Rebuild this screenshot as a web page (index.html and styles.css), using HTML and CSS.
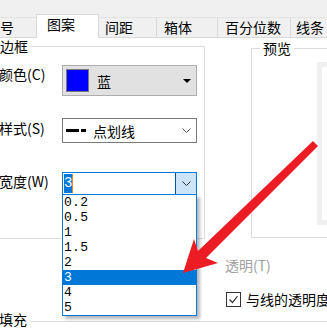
FILE: index.html
```html
<!DOCTYPE html>
<html lang="zh-CN">
<head>
  <meta charset="UTF-8">
  <meta name="viewport" content="width=device-width, initial-scale=1.0">
  <title>设置单元格格式</title>
  <link rel="stylesheet" href="styles.css">
</head>
<body>
  <div class="page">
    <div class="tabs">
      <span class="tab tab-num">号</span>
      <span class="tab tab-active">图案</span>
      <span class="tab tab-space">间距</span>
      <span class="tab tab-box">箱体</span>
      <span class="tab tab-pct">百分位数</span>
      <span class="tab tab-line">线条</span>
    </div>

    <div class="panel">
      <fieldset class="group group-border">
        <legend>边框</legend>
        <div class="row row-color">
          <span class="label">颜色(C)</span>
          <div class="combo combo-color">
            <span class="swatch"></span>
            <span class="combo-text">蓝</span>
            <span class="tri"></span>
          </div>
        </div>
        <div class="row row-style">
          <span class="label">样式(S)</span>
          <div class="combo combo-style">
            <span class="dash"><i class="dash-long"></i><i class="dash-short"></i></span>
            <span class="combo-text">点划线</span>
            <svg class="chev" width="9" height="5" viewBox="0 0 9 5"><polyline points="0.5,0.5 4.5,4.5 8.5,0.5" fill="none" stroke="#555" stroke-width="1"/></svg>
          </div>
        </div>
        <div class="row row-width">
          <span class="label">宽度(W)</span>
          <div class="combo combo-width">
            <span class="value"><span class="sel">3</span><span class="caret"></span></span>
            <span class="drop-btn">
              <svg class="chev" width="9" height="5" viewBox="0 0 9 5"><polyline points="0.5,0.5 4.5,4.5 8.5,0.5" fill="none" stroke="#333" stroke-width="1"/></svg>
            </span>
            <ul class="drop-list">
              <li>0.2</li>
              <li>0.5</li>
              <li>1</li>
              <li>1.5</li>
              <li>2</li>
              <li class="active">3</li>
              <li>4</li>
              <li>5</li>
            </ul>
          </div>
        </div>
      </fieldset>

      <fieldset class="group group-preview">
        <legend>预览</legend>
        <div class="preview-box"></div>
      </fieldset>
    </div>

    <div class="extra">
      <div class="muted">透明(T)</div>
      <div class="check-row">
        <span class="checkbox">
          <svg width="13" height="13" viewBox="0 0 13 13"><polyline points="2.5,6.5 5.5,9.5 10.5,3" fill="none" stroke="#333" stroke-width="1.2"/></svg>
        </span>
        <span>与线的透明度</span>
      </div>
    </div>

    <div class="section-title">填充</div>

    <svg class="arrow" width="327" height="330" viewBox="0 0 327 330">
      <polygon points="183,273 218,263 206,258 318,146 313,141 198,251 194,239" fill="#ec1c24"/>
    </svg>
  </div>
</body>
</html>
```

FILE: styles.css
```css
*{
  box-sizing: border-box;
}
html, body{
  margin: 0;
  padding: 0;
  overflow: hidden;
  background: #fff;
}
body{
  font-family: "Noto Sans CJK SC", "Noto Sans", sans-serif;
  font-size: 14px;
  line-height: 18px;
  color: #000;
}
.page{
  position: relative;
  width: 327px;
  height: 330px;
  overflow: hidden;
}

/* tabs */
.tabs{
  display: flex;
  align-items: flex-end;
  height: 38px;
  background: #f0f0f0;
  border-bottom: 1px solid #d9d9d9;
}
.tab{
  height: 20px;
  border-top: 1px solid #e3e3e3;
  border-right: 1px solid #d9d9d9;
  white-space: nowrap;
  flex: none;
}
.tab-num{ width: 37px; padding-left: 0; }
.tab-active{
  width: 63px;
  height: 24px;
  margin-bottom: -1px;
  margin-left: -1px;
  padding: 0 0 5px 10px;
  background: #fff;
  border: 1px solid #d9d9d9;
  border-bottom: none;
}
.tab-space{ width: 58px; padding-left: 6px; }
.tab-box{ width: 61px; padding-left: 7px; }
.tab-pct{ width: 73px; padding-left: 7px; }
.tab-line{ flex: 1; padding-left: 5px; border-right: none; }

/* group boxes */
.panel{
  display: flex;
  align-items: flex-start;
}
.group{
  margin: 0;
  min-width: 0;
  border: 1px solid #dcdcdc;
}
.group legend{
  line-height: 16px;
  padding: 0 3px 0 0;
}
.group-border{
  width: 205px;
  flex: none;
  border-left: none;
  padding: 0 0 43px 0;
}
.group-preview{
  width: 90px;
  flex: none;
  margin-left: 46px;
  margin-top: 2px;
  border-right: none;
  padding: 0 0 12px 8px;
}
.group-preview legend{
  padding: 0 3px;
}
.preview-box{
  margin: 6px 0 0 57px;
  width: 30px;
  height: 163px;
  border: 5px solid #f0f0f0;
  border-right: none;
  background: #fff;
}

/* rows */
.row{
  display: flex;
  align-items: flex-start;
}
.label{
  width: 62px;
  flex: none;
  margin-left: -1px;
  white-space: nowrap;
}
.row-color{ margin-top: 11px; }
.row-style{ margin-top: 22px; }
.row-style .label{ padding-top: 1px; }
.row-width{ margin-top: 29px; }

.combo{
  position: relative;
  display: flex;
  align-items: center;
  width: 135px;
  margin-left: 1px;
  border: 1px solid #7a7a7a;
  background: #fff;
}
.combo-color{
  height: 31px;
  background: #e1e1e1;
  border-color: #adadad;
}
.swatch{
  width: 23px;
  height: 23px;
  margin-left: 3px;
  background: #0000ff;
  border: 1px solid #7a7a7a;
}
.combo-color .combo-text{
  margin-left: 8px;
}
.tri{
  margin-left: auto;
  margin-right: 5px;
  border-left: 4px solid transparent;
  border-right: 4px solid transparent;
  border-top: 4px solid #000;
}

.combo-style{
  height: 25px;
}
.dash{
  display: flex;
  align-items: center;
  margin-left: 3px;
}
.dash i{
  display: block;
  height: 3px;
  background: #000;
}
.dash-long{ width: 13px; }
.dash-short{ width: 5px; margin-left: 2px; }
.combo-style .combo-text{
  margin-left: 7px;
}
.combo-style .chev{
  margin-left: auto;
  margin-right: 5px;
}

.combo-width{
  height: 23px;
  border-color: #0078d7;
  align-items: stretch;
}
.value{
  display: flex;
  align-items: stretch;
  padding: 1px 0 1px 1px;
  flex: 1;
  font-family: "Liberation Mono", "DejaVu Sans Mono", monospace;
  font-size: 14px;
  line-height: 19px;
}
.sel{
  width: 8px;
  background: #0078d7;
  color: #fff;
}
.caret{
  width: 1px;
  background: #f08020;
}
.drop-btn{
  display: flex;
  align-items: center;
  justify-content: center;
  width: 21px;
  background: #cce4f7;
  border-left: 1px solid #005499;
}

.drop-list{
  position: absolute;
  top: 100%;
  left: -1px;
  width: 135px;
  margin: 0;
  padding: 0;
  list-style: none;
  background: #fff;
  border: 1px solid #0078d7;
  box-shadow: 3px 3px 3px rgba(0,0,0,.28);
  font-family: "Liberation Mono", "DejaVu Sans Mono", monospace;
  font-size: 13px;
  line-height: 15px;
  z-index: 2;
}
.drop-list li{
  height: 15px;
  padding-left: 1px;
  letter-spacing: .3px;
}
.drop-list .active{
  background: #0078d7;
  color: #fff;
}

/* lower part */
.extra{
  margin-left: 225px;
  white-space: nowrap;
}
.muted{
  margin-top: 17px;
  color: #a0a0a0;
}
.check-row{
  display: flex;
  align-items: center;
  margin-top: 16px;
}
.checkbox{
  display: flex;
  width: 15px;
  height: 15px;
  margin-left: 1px;
  margin-right: 5px;
  border: 1px solid #333;
  background: #fff;
}

.section-title{
  display: flex;
  align-items: center;
  margin-top: 2px;
  margin-left: -1px;
}
.section-title::after{
  content: "";
  flex: 1;
  height: 1px;
  margin: 4px 0 0 4px;
  background: #dcdcdc;
}

.arrow{
  position: absolute;
  top: 0;
  left: 0;
  pointer-events: none;
  z-index: 5;
}
```
